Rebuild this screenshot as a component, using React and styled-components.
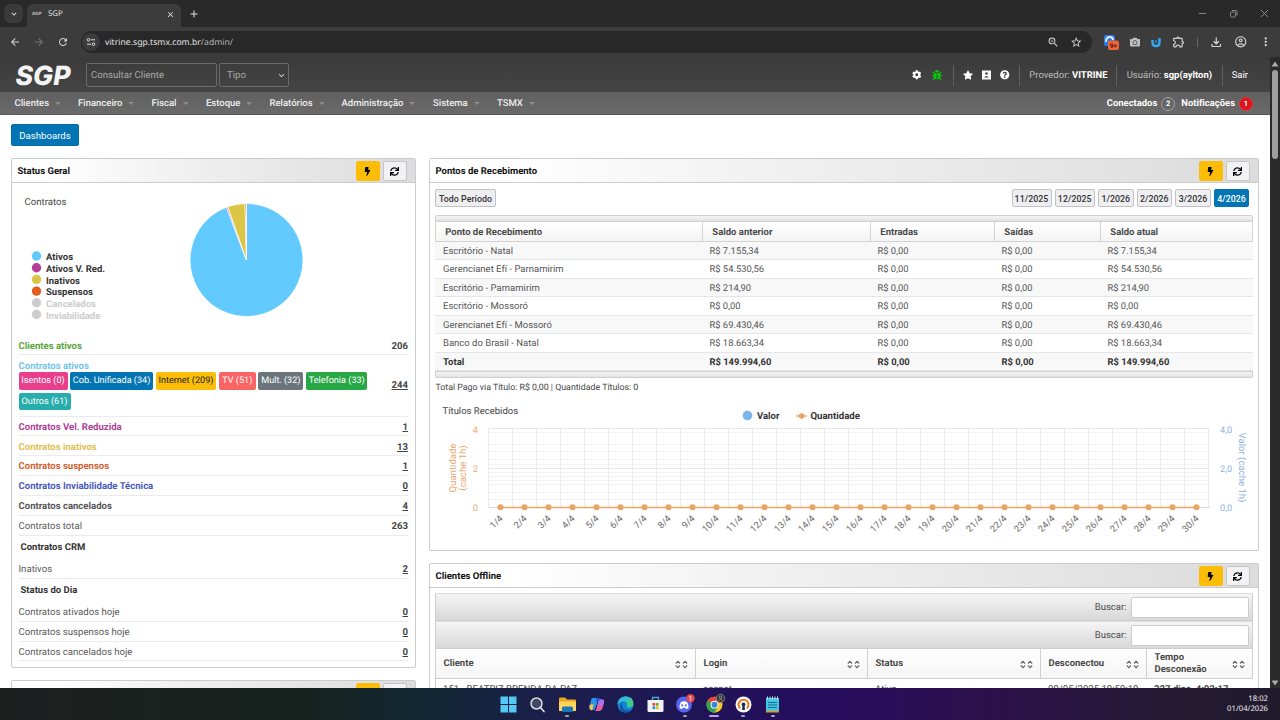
import React from 'react';
import styled, { createGlobalStyle } from 'styled-components';
import { FaBolt, FaBug, FaCamera, FaCog, FaQuestionCircle, FaStar, FaSync } from 'react-icons/fa';
import {
  MdArrowBack, MdArrowForward, MdClose, MdExpandMore, MdMoreVert, MdOutlineAccountCircle, MdOutlineExtension,
  MdOutlineFileDownload, MdRefresh, MdStarBorder, MdZoomIn, MdAdd,
} from 'react-icons/md';

const GlobalStyle = createGlobalStyle`
* { box-sizing: border-box; }
body {
  margin: 0;
  width: 1280px;
  height: 720px;
  overflow: hidden;
  background: #fff;
  font-family: Roboto, "Liberation Sans", sans-serif;
  font-size: 9.5px;
  color: #4a4a4a;
  text-rendering: geometricPrecision;
}
svg { display: block; flex: none; }
`;

const Screen = styled.div`
width: 1280px;
height: 720px;
display: flex;
flex-direction: column;
overflow: hidden;
`;

/* browser */
const TabStrip = styled.div`
height: 27px;
flex: none;
display: flex;
align-items: flex-end;
padding: 0 11px 0 4px;
background: #292929;
color: #e3e3e3;
`;
const TabSearch = styled.div`
width: 19px;
height: 19px;
margin: 0 4px 4px 0;
border-radius: 6px;
background: #3a3a3a;
display: flex;
align-items: center;
justify-content: center;
`;
const Tab = styled.div`
width: 154px;
height: 23px;
border-radius: 6px 6px 0 0;
background: #3c3c3c;
display: flex;
align-items: center;
padding: 0 6px 3px 5px;
font-family: "Noto Sans", sans-serif;
font-size: 7.8px;
`;
const Favicon = styled.span`
width: 16px;
font: italic 900 4.5px Inter, sans-serif;
color: #aaa;
`;
const TabTitle = styled.span`
flex: 1;
`;
const NewTab = styled.div`
padding: 0 0 7px 7px;
flex: 1;
`;
const WindowButtons = styled.div`
display: flex;
align-items: center;
height: 27px;
gap: 22px;
color: #888;
`;
const AddressRow = styled.div`
height: 30px;
flex: none;
display: flex;
align-items: center;
padding: 0 8px;
background: #3c3c3c;
color: #d5d5d5;
`;
const NavIcons = styled.div`
width: 73px;
display: flex;
gap: 12px;
padding-left: 1px;
`;
const Omnibox = styled.div`
width: 1011px;
height: 22px;
border-radius: 11px;
background: #282828;
display: flex;
align-items: center;
padding: 0 10px 0 1px;
gap: 10px;
`;
const SiteInfo = styled.div`
width: 18px;
height: 18px;
border-radius: 9px;
background: #3c3c3c;
display: flex;
align-items: center;
justify-content: center;
`;
const Url = styled.span`
flex: 1;
margin-left: -5px;
font-family: "Noto Sans", sans-serif;
font-size: 8.65px;
color: #e3e3e3;
span { color: #b4b4b4; }
`;
const Extensions = styled.div`
flex: 1;
display: flex;
align-items: center;
justify-content: space-between;
padding-left: 12px;
`;
const ToolDivider = styled.i`
width: 1px;
height: 10px;
background: #666;
`;

/* page */
const Body = styled.div`
flex: 1;
min-height: 0;
display: flex;
`;
const Page = styled.main`
width: 1270px;
height: 631px;
overflow: hidden;
display: flex;
flex-direction: column;
`;
const Scrollbar = styled.div`
width: 10px;
background: #2b2b2b;
display: flex;
flex-direction: column;
align-items: center;
padding: 4px 0 2px;
`;
const Thumb = styled.div`
width: 6px;
height: 89px;
margin: 3px 0 auto;
border-radius: 3px;
background: #9f9f9f;
`;
const TopBar = styled.header`
height: 35px;
flex: none;
display: flex;
align-items: center;
padding: 1px 22px 0 15px;
background: linear-gradient(#3a3a3a, #454545);
color: #bbb;
`;
const SearchBox = styled.div`
width: 131px;
height: 24px;
margin: -1px 0 0 14px;
padding: 1px 0 0 4px;
border: 1px solid #6a6a6a;
border-radius: 2px;
display: flex;
align-items: center;
font-size: 9.6px;
color: #a9a9a9;
`;
const TypeSelect = styled(SearchBox)`
width: 70px;
padding: 1px 1px 0 7px;
justify-content: space-between;
margin: -1px auto 0 2px;
`;
const Tools = styled.div`
display: flex;
align-items: center;
gap: ${p => p.$gap}px;
color: #fff;
`;
const Sep = styled.i`
width: 1px;
height: 21px;
margin: 0 ${p => p.$r}px 0 ${p => p.$l}px;
background: #606060;
`;
const Label = styled.span`
padding-top: 1px;
font-size: 9.5px;
white-space: nowrap;
b, a { color: #fff; }
`;
const MenuBar = styled.nav`
height: 23px;
flex: none;
display: flex;
align-items: center;
padding: 1px 17px 0 14.5px;
background: linear-gradient(#606060, #6a6a6a);
border-bottom: 1px solid #565656;
color: #eee;
font-weight: 500;
font-size: 9.5px;
`;
const MenuItem = styled.div`
width: ${p => p.$w}px;
display: flex;
align-items: center;
&::after {
  content: '';
  margin-left: 6px;
  border: 3px solid transparent;
  border-top-color: #8e8e8e;
  border-bottom: 0;
}
`;
const MenuRight = styled.div`
margin-left: auto;
display: flex;
align-items: center;
color: #fff;
font-weight: 700;
font-size: 9.4px;
letter-spacing: 0.03px;
`;
const Count = styled.span`
width: 14px;
height: 14px;
margin: 0 ${p => (p.$red ? 0 : 6)}px 0 4px;
border: 1px solid ${p => (p.$red ? '#e33' : '#a0a0a0')};
border-radius: 50%;
background: ${p => (p.$red ? '#d9151f' : 'transparent')};
display: flex;
align-items: center;
justify-content: center;
font-size: 7.5px;
`;
const DashButton = styled.button`
width: 68px;
height: 22px;
margin: 9px 0 12px 11px;
padding: 1px 0 0;
flex: none;
border: 1px solid #066ca5;
border-radius: 2px;
background: #0375b4;
color: #fff;
font: 400 9.6px Roboto, sans-serif;
`;
const Columns = styled.section`
display: flex;
gap: 13px;
padding-left: 11px;
`;
const Column = styled.div`
width: ${p => p.$w}px;
display: flex;
flex-direction: column;
gap: 12px;
`;
const Panel = styled.section`
height: ${p => p.$h}px;
border: 1px solid #c9ccce;
border-radius: 2px;
background: #fff;
`;
const PanelHead = styled.header`
height: 24px;
display: flex;
align-items: center;
padding: 0 8.5px 0 5.5px;
border-bottom: 1px solid #ccc;
background: linear-gradient(to right, #fff 10%, #f1f1f2 40%, #dcdcdd);
h2 {
  margin: 1px auto 0 0;
  font-size: 9.5px;
  font-weight: 700;
  color: #111;
}
`;
const HeadButton = styled.button`
width: 24px;
height: 20px;
margin: 1px 0 0 3px;
padding: 0;
display: flex;
align-items: center;
justify-content: center;
border: 1px solid ${p => (p.$yellow ? '#fbbd08' : '#c6c6c6')};
border-radius: 2px;
background: ${p => (p.$yellow ? '#fbbd08' : '#f2f2f4')};
color: #000;
`;

/* status list */
const Stat = styled.div`
height: ${p => p.$h || 19.9}px;
margin: 0 7px 0 6.5px;
padding-top: ${p => p.$top ?? 2.5}px;
display: flex;
align-items: center;
justify-content: space-between;
border-bottom: 1px solid #ebebeb;
color: ${p => p.$color || '#585858'};
font-weight: ${p => (p.$bold ? 700 : 400)};
font-size: ${p => (p.$bold ? 9.55 : 9.6)}px;
`;
const StatValue = styled.span`
font-weight: 700;
color: #444;
text-decoration: ${p => (p.$link ? 'underline' : 'none')};
text-underline-offset: 1px;
`;
const StatHeading = styled.h3`
height: 23px;
margin: 0 0 0 8.5px;
padding-top: 1px;
display: flex;
align-items: center;
font-size: 9.5px;
font-weight: 700;
color: #333;
`;
const Tags = styled.div`
width: 356px;
display: flex;
flex-wrap: wrap;
gap: 3px 2.6px;
font-weight: 400;
`;
const Tag = styled.span`
width: ${p => p.$w}px;
height: 17.7px;
padding-top: 1px;
border-radius: 2px;
background: ${p => p.$bg};
color: ${p => p.$fg || '#fff'};
display: flex;
align-items: center;
justify-content: center;
font-size: 9.1px;
white-space: nowrap;
`;

/* receipts */
const Periods = styled.div`
height: 32px;
display: flex;
align-items: center;
gap: 3px;
padding: 0 9px 2px 5px;
`;
const Period = styled.button`
width: ${p => p.$w}px;
height: 18px;
margin-right: ${p => (p.$first ? 'auto' : 0)};
padding: 1px 0 0;
border: 1px solid ${p => (p.$on ? '#0375b4' : '#c2c2c6')};
border-radius: 2px;
background: ${p => (p.$on ? '#0375b4' : '#efeff2')};
color: ${p => (p.$on ? '#fff' : '#333')};
font: 500 8.8px Roboto, sans-serif;
letter-spacing: 0.05px;
white-space: nowrap;
`;
const Strip = styled.div`
height: 7px;
margin: 0 5px;
border: 1px solid #cfcfcf;
border-radius: ${p => (p.$bottom ? '0 0 2px 2px' : '2px 2px 0 0')};
background: linear-gradient(#f5f5f5, #e2e2e2);
`;
const Grid = styled.div`
margin: 0 5px;
display: grid;
grid-template-columns: 268px 168px 124px 106px 1fr;
grid-template-rows: 19.5px;
grid-auto-rows: 18.55px;
`;
const HeadCell = styled.div`
padding: 2px 0 0 9.3px;
display: flex;
align-items: center;
border: solid #d3d3d3;
border-width: 0 1px 1px 0;
&:first-child { border-left-width: 1px; }
background: linear-gradient(#fff, #f4f4f4);
font-weight: 700;
font-size: 9.5px;
`;
const Cell = styled.div`
padding: 1.5px 0 0 ${p => (p.$first ? 8 : 6.5)}px;
display: flex;
align-items: center;
border-bottom: 1px solid #e4e6e8;
background: ${p => (p.$odd ? '#f8f8f9' : '#fff')};
font-size: ${p => (p.$first ? 9.5 : 9.4)}px;
font-weight: ${p => (p.$bold ? 700 : 400)};
color: ${p => (p.$bold ? '#333' : '#555')};
`;
const Note = styled.div`
height: 18px;
padding: 1px 5.5px 0;
display: flex;
align-items: center;
font-size: 8.8px;
color: #444;
`;

/* offline */
const Offline = styled.div`
margin: 5px 5px 0;
`;
const FilterBar = styled.label`
height: 28px;
padding-right: 3px;
display: flex;
align-items: center;
justify-content: flex-end;
gap: 4px;
border: 1px solid #cecece;
border-top-color: #ddd;
background: linear-gradient(#f5f5f5, #d8d8d8);
font-size: 9.5px;
input {
  width: 118.5px;
  height: 21px;
  border: 1px solid #ccc;
  border-radius: 2px;
  background: #fff;
}
`;
const OfflineGrid = styled.div`
display: grid;
grid-template-columns: 260px 172px 173px 106px 1fr;
grid-template-rows: 30px 20px;
border-left: 1px solid #ccc;
`;
const SortHead = styled.div`
padding: 1px 7px 0 7.5px;
display: flex;
align-items: center;
justify-content: space-between;
line-height: 12px;
border-right: 1px solid #d0d0d0;
border-bottom: 1px solid #cfcfcf;
background: linear-gradient(#fff, #f5f5f5);
font-weight: 700;
font-size: 9.5px;
`;
const OfflineCell = styled.div`
padding: 5px 7px 0;
white-space: nowrap;
font-size: 9.6px;
`;

const Taskbar = styled.footer`
height: 32px;
flex: none;
display: flex;
align-items: center;
justify-content: flex-end;
padding-right: 12px;
background: linear-gradient(to right, #1e2020, #17231f 24%, #112733 33%, #1b1f4c 43%, #230f5c 61%, #2a0e5c 68%, #2d104b 77%, #251a35 90%, #211b2d);
`;
const Apps = styled.div`
display: flex;
margin-right: 434.5px;
`;
const App32 = styled.div`
width: 29.4px;
height: 32px;
display: flex;
flex-direction: column;
align-items: center;
padding-top: 8px;
&::after {
  content: '';
  width: ${p => (p.$active ? 10 : 4)}px;
  height: 2px;
  margin-top: 2px;
  border-radius: 1px;
  background: ${p => (p.$active ? '#c79df0' : p.$open ? '#a6a0b8' : 'transparent')};
}
`;
const Clock = styled.div`
width: 46px;
text-align: right;
font-family: "Noto Sans", sans-serif;
font-size: 7.7px;
line-height: 10.5px;
color: #eee;
`;

const MENU = [['Clientes', 63.5], ['Financeiro', 73.5], ['Fiscal', 54.5], ['Estoque', 63.5], ['Relatórios', 72],
  ['Administração', 91.5], ['Sistema', 64], ['TSMX', 50]];

const TAGS = [
  ['Isentos (0)', 49, '#e83e8c'],
  ['Cob. Unificada (34)', 83, '#0375b4'],
  ['Internet (209)', 60.5, '#fbbd08', '#222'],
  ['TV (51)', 37, '#fb6464'],
  ['Mult. (32)', 45, '#6c757d'],
  ['Telefonia (33)', 61.5, '#28a745'],
  ['Outros (61)', 52, '#27adab'],
];

const STATS = [
  ['Contratos Vel. Reduzida', 1, '#ac4199'],
  ['Contratos inativos', 13, '#dcc253'],
  ['Contratos suspensos', 1, '#cf6230'],
  ['Contratos Inviabilidade Técnica', 0, '#4a59bd'],
  ['Contratos cancelados', 4, '#555'],
];

const RECEIPTS = [
  ['Escritório - Natal', 'R$ 7.155,34'],
  ['Gerencianet Efí - Parnamirim', 'R$ 54.530,56'],
  ['Escritório - Parnamirim', 'R$ 214,90'],
  ['Escritório - Mossoró', 'R$ 0,00'],
  ['Gerencianet Efí - Mossoró', 'R$ 69.430,46'],
  ['Banco do Brasil - Natal', 'R$ 18.663,34'],
  ['Total', 'R$ 149.994,60'],
];

const PERIODS = [['11/2025', 40], ['12/2025', 40.5], ['1/2026', 35.5], ['2/2026', 35.5], ['3/2026', 36], ['4/2026', 35]];

const LEGEND = [
  ['Ativos', '#62caff'],
  ['Ativos V. Red.', '#b53d97'],
  ['Inativos', '#ddc545'],
  ['Suspensos', '#e25c1f'],
  ['Cancelados', '#ccc'],
  ['Inviabilidade', '#ccc'],
];

const PanelHeader = ({ title }) => (
  <PanelHead>
    <h2>{title}</h2>
    <HeadButton $yellow><FaBolt size={9} /></HeadButton>
    <HeadButton><FaSync size={9} /></HeadButton>
  </PanelHead>
);

const slice = (from, to) => {
  const point = a => `${234.5 + 56.5 * Math.sin(a * 2 * Math.PI)} ${78 - 56.5 * Math.cos(a * 2 * Math.PI)}`;
  return `M234.5 78L${point(from)}A56.5 56.5 0 ${to - from > 0.5 ? 1 : 0} 1 ${point(to)}Z`;
};

const PieChart = () => (
  <svg width="402" height="154" viewBox="0 1 402 154">
    <text x="12.5" y="23" fontSize="9.6" fill="#444">Contratos</text>
    {LEGEND.map(([name, color], i) => (
      <g key={name}>
        <circle cx="24.5" cy={74 + i * 11.7} r="4.7" fill={color} />
        <text x="34" y={78 + i * 11.75} fontSize="9.5" fontWeight="700" fill={i > 3 ? '#ccc' : '#333'}>{name}</text>
      </g>
    ))}
    <g stroke="#fff" strokeWidth="0.8">
      <path d={slice(0, 0.942)} fill="#62caff" />
      <path d={slice(0.942, 0.946)} fill="#b53d97" />
      <path d={slice(0.946, 0.996)} fill="#ddc545" />
      <path d={slice(0.996, 1)} fill="#e25c1f" />
    </g>
  </svg>
);

const DAYS = Array.from({ length: 30 }, (_, i) => i + 1);
const dayX = d => 58.5 + (d - 0.5) * 24;

const TitlesChart = () => (
  <svg width="828" height="150" viewBox="0 1 828 150">
    <text x="12.5" y="19" fontSize="9.5" fill="#444">Títulos Recebidos</text>
    <circle cx="317.5" cy="20.5" r="4.8" fill="#7cb5ec" />
    <text x="327" y="24" fontSize="9.5" fontWeight="700" fill="#333">Valor</text>
    <path d="M366 21H377" stroke="#eba462" strokeWidth="1.3" />
    <circle cx="371.5" cy="21" r="2.8" fill="#eba462" />
    <text x="380.5" y="24" fontSize="9.6" fontWeight="700" fill="#333">Quantidade</text>
    {[37, 49, 56, 64, 69, 77, 81, 85, 89, 97, 104].map(y => (
      <path key={y} d={`M58.5 ${y}.5H779.5`} stroke="#f3f3f5" />
    ))}
    {DAYS.concat(31).map(d => <path key={d} d={`M${dayX(d) - 12} 33.5V112`} stroke="#ebebee" />)}
    <path d="M58.5 33.5H779.5M58.5 73.5H779.5" stroke="#e6e6ea" />
    <path d="M58.5 112.5H779.5" stroke="#ccd6eb" />
    <path d={`M${dayX(1)} 112.5H${dayX(30)}`} stroke="#eba462" strokeWidth="1.3" />
    {DAYS.map(d => (
      <g key={d}>
        <circle cx={dayX(d)} cy="112.3" r="3" fill="#eba462" />
        <text transform={`translate(${dayX(d) + 3} 124) rotate(-45)`} textAnchor="end" fontSize="9.2" fill="#666">{d}/4</text>
      </g>
    ))}
    <g fontSize="9.2" fill="#e8a974" textAnchor="end">
      <text x="48" y="38">4</text>
      <text x="48" y="77">2</text>
      <text x="48" y="116">0</text>
    </g>
    <g fontSize="9.2" fill="#8fb4de">
      <text x="790" y="38">4,0</text>
      <text x="790" y="77">2,0</text>
      <text x="790" y="116">0,0</text>
      <text transform="translate(808.5 72.5) rotate(90)" textAnchor="middle" fontSize="9.6">Valor (cache 1h)</text>
    </g>
    <g fontSize="9.6" fill="#e8a974" textAnchor="middle">
      <text transform="translate(25.5 73) rotate(-90)">Quantidade</text>
      <text transform="translate(36 73) rotate(-90)">(cache 1h)</text>
    </g>
  </svg>
);

const SortIcon = () => (
  <svg width="13" height="9" viewBox="0 0 13 9" fill="none" stroke="#666" strokeWidth="1.1">
    <path d="M0.8 3.500L2.900 1.300L5 3.500M0.8 5.500L2.900 7.700L5 5.500M8 3.500L10.100 1.300L12.200 3.500M8 5.500L10.100 7.700L12.200 5.500" />
  </svg>
);

const Taskicons = () => (
  <Apps>
    <App32>
      <svg width="17" height="17" viewBox="0 0 17 17" fill="#55c8f5">
        <path d="M0.500 0.500h7.500v7.500H0.500zM9 0.500h7.500v7.500H9zM0.500 9h7.500v7.500H0.500zM9 9h7.500v7.500H9z" />
      </svg>
    </App32>
    <App32>
      <svg width="17" height="17" viewBox="0 0 17 17">
        <circle cx="7.500" cy="7.500" r="5.500" fill="#44476a" stroke="#ddd" strokeWidth="1.500" />
        <path d="M11.500 11.500L15 15.500" stroke="#ddd" strokeWidth="1.800" strokeLinecap="round" />
      </svg>
    </App32>
    <App32 $open>
      <svg width="17" height="17" viewBox="0 0 17 17">
        <path d="M0 2.500q0-1 1-1h5l2 2h8q1 0 1 1V15H0z" fill="#e9a820" />
        <path d="M0 5.500h17V15H0z" fill="#ffd45a" />
        <path d="M3 16v-4q0-1.500 1.500-1.500h8q1.500 0 1.500 1.500v4z" fill="#1976b8" />
      </svg>
    </App32>
    <App32>
      <svg width="17" height="17" viewBox="0 0 17 17">
        <path d="M5 2h5.500l-3 10q-.6 2-2.500 2H3q-2 0-1.500-2.500L3 4q.5-2 2-2z" fill="#2f93e8" />
        <path d="M1.500 9l4-1-1 5.500Q4 15 3 14 1 13 1.500 9z" fill="#f5c64a" />
        <path d="M12 3.500h2q2.800 0 2 2.800l-1.500 6q-.7 2.700-3 2.700H6.500q1.300-.3 1.800-2l2-7q.5-2 1.700-2.500z" fill="#ea5ba6" />
        <path d="M12 3.500h2q2.800 0 2 2.800l-.8 3.200H9.200l1.100-3.500q.5-2 1.700-2.500z" fill="#a574ec" />
        <path d="M8.500 2h2.300q1.300 0 1.600 1.500-1.500.3-2.100 2.500L7.500 5z" fill="#1b62cf" />
      </svg>
    </App32>
    <App32>
      <svg width="17" height="17" viewBox="0 0 17 17">
        <circle cx="8.500" cy="8.500" r="8" fill="#1484d6" />
        <path d="M.6 8Q2 .5 8.500 .5q8 0 8 7 0 4-4.500 4-3 0-2-2 1-4-3.500-4.500Q3 5 .6 8z" fill="#3fc98a" />
        <path d="M.6 7Q2.500 .5 8.500 .5 12 .5 14 2.500 10 5 7 5 3 5 .6 8z" fill="#35b8dc" />
        <path d="M6 6.500Q4 9.500 6.500 12.500T13.500 13.500Q11 17 7 16.400 3 15 3 11 3 8 6 6.500z" fill="#1257a8" />
      </svg>
    </App32>
    <App32>
      <svg width="17" height="17" viewBox="0 0 17 17">
        <path d="M5.500 5V1.500h6V5" fill="none" stroke="#4aa9dc" strokeWidth="1.300" />
        <path d="M.5 4h16v10.500q0 1.500-1.500 1.500H2Q.5 16 .5 14.500z" fill="#f2f2f5" />
        <path d="M5.500 7h2.700v2.700H5.500z" fill="#e84c2e" /><path d="M8.900 7h2.700v2.700H8.900z" fill="#6aab20" />
        <path d="M5.500 10.400h2.700v2.700H5.500z" fill="#1e90d8" /><path d="M8.900 10.400h2.700v2.700H8.900z" fill="#f2b50f" />
      </svg>
    </App32>
    <App32 $open>
      <svg width="19" height="17" viewBox="0 0 19 17" overflow="visible">
        <circle cx="9" cy="8.500" r="8" fill="#5865f2" />
        <path d="M4.500 12q0-4 1.500-6 3-1.300 6 0 1.500 2 1.500 6-1 1-2.500 1l-.8-1.200H7.800L7 13q-1.500 0-2.500-1z" fill="#fff" />
        <circle cx="7.200" cy="9.300" r="1.100" fill="#5865f2" /><circle cx="10.800" cy="9.300" r="1.100" fill="#5865f2" />
        <circle cx="15.500" cy="2.300" r="4.200" fill="#e5484f" />
        <text x="15.500" y="4.800" fontSize="7" textAnchor="middle" fill="#fff">1</text>
      </svg>
    </App32>
    <App32 $open $active>
      <svg width="19" height="17" viewBox="0 0 19 17" overflow="visible">
        <circle cx="9.500" cy="8.700" r="8" fill="#f6c624" />
        <path d="M9.500 8.700L2.600 4.700A8 8 0 0 1 16.400 4.700z" fill="#e5423a" />
        <path d="M9.500 8.700L2.600 4.700A8 8 0 0 0 9.500 16.700L13 10.700z" fill="#2ea44f" />
        <circle cx="9.500" cy="8.700" r="3.900" fill="#fff" /><circle cx="9.500" cy="8.700" r="3" fill="#3b82e0" />
        <circle cx="15.500" cy="2.300" r="4.200" fill="#333" stroke="#999" strokeWidth=".7" />
        <circle cx="15.500" cy="1.300" r="1.300" fill="none" stroke="#aaa" strokeWidth=".7" />
        <path d="M13.300 4.500q2.200-2 4.400 0" fill="none" stroke="#aaa" strokeWidth=".7" />
      </svg>
    </App32>
    <App32 $open>
      <svg width="17" height="17" viewBox="0 0 17 17">
        <circle cx="8.500" cy="8.500" r="8" fill="#fff" />
        <path d="M5.300 12.500A5 5 0 1 1 11.700 12.500" fill="none" stroke="#ea7e1c" strokeWidth="2" />
        <circle cx="8.500" cy="8.500" r="1.900" fill="#1a2c57" /><path d="M7.500 9h2l.5 5H7z" fill="#1a2c57" />
      </svg>
    </App32>
    <App32 $open>
      <svg width="15" height="17" viewBox="0 0 15 17">
        <path d="M1 2h13v14H1z" fill="#45c5e6" /><path d="M1 14.500h13V16.500H1z" fill="#c9a23c" />
        <path d="M2.500 .5v3M5 .5v3M7.500 .5v3M10 .5v3M12.500 .5v3" stroke="#c4eef8" strokeWidth="1" />
        <path d="M3 6.500h9M3 9h9M3 11.500h9" stroke="#176d91" strokeWidth="1" />
      </svg>
    </App32>
  </Apps>
);

const Browser = () => <>
  <TabStrip>
    <TabSearch><MdExpandMore size={10} /></TabSearch>
    <Tab>
      <Favicon>SGP</Favicon>
      <TabTitle>SGP</TabTitle>
      <MdClose size={9} />
    </Tab>
    <NewTab><MdAdd size={12} /></NewTab>
    <WindowButtons>
      <svg width="9" height="9" stroke="currentColor"><path d="M1 4.500H8" /></svg>
      <svg width="9" height="9" stroke="currentColor" fill="none">
        <rect x="1.500" y="3" width="5" height="5" rx="1" /><path d="M3 1.500H7Q8 1.500 8 2.500V6.500" />
      </svg>
      <svg width="9" height="9" stroke="currentColor"><path d="M1 1L8 8M8 1L1 8" /></svg>
    </WindowButtons>
  </TabStrip>
  <AddressRow>
    <NavIcons>
      <MdArrowBack size={12} />
      <MdArrowForward size={12} color="#777" />
      <MdRefresh size={12} />
    </NavIcons>
    <Omnibox>
      <SiteInfo>
        <svg width="10" height="10" viewBox="0 0 10 10" fill="none" stroke="#ddd">
          <circle cx="2.500" cy="2.800" r="1.300" /><path d="M5 2.800H9M1 7.200H5" /><circle cx="7.500" cy="7.200" r="1.300" />
        </svg>
      </SiteInfo>
      <Url>vitrine.sgp.tsmx.com.br<span>/admin/</span></Url>
      <MdZoomIn size={12.5} />
      <MdStarBorder size={12.5} />
    </Omnibox>
    <Extensions>
      <svg width="15" height="16" viewBox="0 0 15 16">
        <rect width="11" height="11" y="1" rx="2" fill="#2e7be0" />
        <path d="M2 8q0-5 4-5 3 0 3 3" fill="none" stroke="#dcecff" strokeWidth="1.800" />
        <rect x="4" y="6.500" width="11" height="9.500" rx="2" fill="#f0643c" />
        <text x="9.500" y="13.500" fontSize="6.500" fontWeight="700" textAnchor="middle" fill="#4a150a">9+</text>
      </svg>
      <FaCamera size={10} color="#c0c0c0" />
      <svg width="10" height="11" viewBox="0 0 10 11">
        <path d="M1.500 3v2.500Q1.500 9 5 9T8.500 5.500V1" fill="none" stroke="#36aaf0" strokeWidth="2.400" />
        <path d="M5 3v3" stroke="#2773d2" strokeWidth="2" />
      </svg>
      <MdOutlineExtension size={13.5} />
      <ToolDivider />
      <MdOutlineFileDownload size={14.5} />
      <MdOutlineAccountCircle size={13.5} />
      <MdMoreVert size={13.5} />
    </Extensions>
  </AddressRow>
</>;

const Header = () => <>
  <TopBar>
    <svg width="57" height="21" viewBox="0 0 57 21" overflow="visible">
      <text x="0.500" y="20" fill="#f4f4f4" fontFamily="Inter, sans-serif" fontWeight="800" fontStyle="italic" fontSize="26.500" textLength="55" lengthAdjust="spacingAndGlyphs">SGP</text>
    </svg>
    <SearchBox>Consultar Cliente</SearchBox>
    <TypeSelect>Tipo <MdExpandMore size={11} color="#ddd" /></TypeSelect>
    <Tools $gap={11}><FaCog size={9.5} /><FaBug size={10} color="#08c808" /></Tools>
    <Sep $l={11} $r={9} />
    <Tools $gap={9}>
      <FaStar size={10} />
      <svg width="9" height="10" viewBox="0 0 9 10">
        <path d="M0 0.500H9V9.500H0z" fill="#fff" />
        <circle cx="4.500" cy="3.500" r="1.300" fill="#444" />
        <path d="M2 7.500Q4.500 4.500 7 7.500z" fill="#444" />
      </svg>
      <FaQuestionCircle size={9.5} />
    </Tools>
    <Sep $l={9} $r={9.5} />
    <Label>Provedor: <b>VITRINE</b></Label>
    <Sep $l={8.5} $r={9.5} />
    <Label>Usuário: <b>sgp(aylton)</b></Label>
    <Sep $l={9.5} $r={9} />
    <Label><a>Sair</a></Label>
  </TopBar>
  <MenuBar>
    {MENU.map(([name, w]) => <MenuItem key={name} $w={w}>{name}</MenuItem>)}
    <MenuRight>Conectados <Count>2</Count>Notificações <Count $red>1</Count></MenuRight>
  </MenuBar>
</>;

const StatusPanel = () => (
  <Panel $h={510}>
    <PanelHeader title="Status Geral" />
    <PieChart />
    <Stat $h={18} $bold $color="#5aa43c">Clientes ativos <StatValue>206</StatValue></Stat>
    <Stat $h={61.5} $top={1} $bold $color="#74c4ee">
      <div>
        Contratos ativos
        <Tags>{TAGS.map(([name, w, bg, fg]) => <Tag key={name} $w={w} $bg={bg} $fg={fg}>{name}</Tag>)}</Tags>
      </div>
      <StatValue $link>244</StatValue>
    </Stat>
    {STATS.map(([name, value, color]) => (
      <Stat key={name} $bold $color={color}>{name} <StatValue $link>{value}</StatValue></Stat>
    ))}
    <Stat>Contratos total <StatValue>263</StatValue></Stat>
    <StatHeading>Contratos CRM</StatHeading>
    <Stat>Inativos <StatValue $link>2</StatValue></Stat>
    <StatHeading>Status do Dia</StatHeading>
    {['ativados', 'suspensos', 'cancelados'].map(kind => (
      <Stat key={kind}>Contratos {kind} hoje <StatValue $link>0</StatValue></Stat>
    ))}
  </Panel>
);

const ReceiptsPanel = () => (
  <Panel $h={393}>
    <PanelHeader title="Pontos de Recebimento" />
    <Periods>
      <Period $first $w={61}>Todo Período</Period>
      {PERIODS.map(([name, w]) => <Period key={name} $w={w} $on={name === '4/2026'}>{name}</Period>)}
    </Periods>
    <Strip />
    <Grid>
      {['Ponto de Recebimento', 'Saldo anterior', 'Entradas', 'Saídas', 'Saldo atual'].map(name => (
        <HeadCell key={name}>{name}</HeadCell>
      ))}
      {RECEIPTS.map(([name, value], i) => [name, value, 'R$ 0,00', 'R$ 0,00', value].map((text, col) => (
        <Cell key={name + col} $first={col === 0} $odd={i % 2 === 0} $bold={name === 'Total'}>{text}</Cell>
      )))}
    </Grid>
    <Strip $bottom />
    <Note>Total Pago via Título: R$ 0,00 | Quantidade Títulos: 0</Note>
    <TitlesChart />
  </Panel>
);

const OfflinePanel = () => (
  <Panel $h={200}>
    <PanelHeader title="Clientes Offline" />
    <Offline>
      <FilterBar>Buscar: <input /></FilterBar>
      <FilterBar>Buscar: <input /></FilterBar>
      <OfflineGrid>
        {['Cliente', 'Login', 'Status', 'Desconectou', 'Tempo Desconexão'].map(name => (
          <SortHead key={name}>{name} <SortIcon /></SortHead>
        ))}
        <OfflineCell>151 - BEATRIZ BRENDA DA PAZ</OfflineCell>
        <OfflineCell>accnet</OfflineCell>
        <OfflineCell>Ativo</OfflineCell>
        <OfflineCell>09/05/2025 19:59:19</OfflineCell>
        <OfflineCell><b>327 dias, 4:02:17</b></OfflineCell>
      </OfflineGrid>
    </Offline>
  </Panel>
);

const App = () => <>
  <GlobalStyle />
  <Screen>
    <Browser />
    <Body>
      <Page>
        <Header />
        <DashButton>Dashboards</DashButton>
        <Columns>
          <Column $w={405}>
            <StatusPanel />
            <Panel $h={60}><PanelHeader title="" /></Panel>
          </Column>
          <Column $w={830}>
            <ReceiptsPanel />
            <OfflinePanel />
          </Column>
        </Columns>
      </Page>
      <Scrollbar>
        <svg width="8" height="6"><path d="M4 0.500L7.500 5.500H0.500z" fill="#aaa" /></svg>
        <Thumb />
        <svg width="8" height="6"><path d="M4 5.500L7.500 0.500H0.500z" fill="#aaa" /></svg>
      </Scrollbar>
    </Body>
    <Taskbar>
      <Taskicons />
      <Clock>18:02<br />01/04/2026</Clock>
    </Taskbar>
  </Screen>
</>;

export default App;
